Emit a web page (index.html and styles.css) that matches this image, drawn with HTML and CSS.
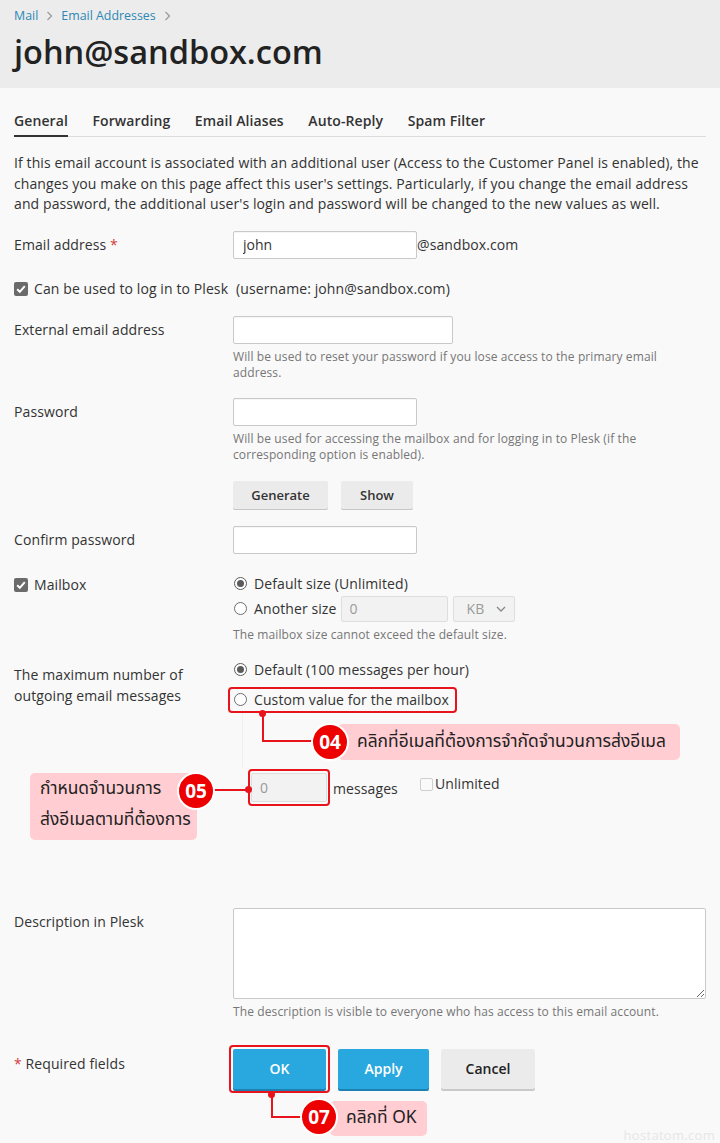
FILE: index.html
```html
<!DOCTYPE html>
<html lang="en">
<head>
<meta charset="utf-8">
<title>john@sandbox.com</title>
<link rel="stylesheet" href="styles.css">
</head>
<body>
<div class="page">
  <header class="page-header">
    <nav class="breadcrumb">
      <a class="crumb">Mail</a>
      <svg class="chev" width="7" height="10" viewBox="0 0 7 10"><polyline points="1.5,1 5.5,5 1.5,9" fill="none" stroke="#9a9a9a" stroke-width="1.2"/></svg>
      <a class="crumb">Email Addresses</a>
      <svg class="chev" width="7" height="10" viewBox="0 0 7 10"><polyline points="1.5,1 5.5,5 1.5,9" fill="none" stroke="#9a9a9a" stroke-width="1.2"/></svg>
    </nav>
    <h1 class="title">john@sandbox.com</h1>
  </header>

  <main class="content">
    <ul class="tabs">
      <li class="tab active">General</li>
      <li class="tab">Forwarding</li>
      <li class="tab">Email Aliases</li>
      <li class="tab">Auto-Reply</li>
      <li class="tab">Spam Filter</li>
    </ul>

    <p class="intro">If this email account is associated with an additional user (Access to the Customer Panel is enabled), the changes you make on this page affect this user's settings. Particularly, if you change the email address and password, the additional user's login and password will be changed to the new values as well.</p>

    <div class="row row-email">
      <div class="label">Email address <span class="req">*</span></div>
      <div class="control inline">
        <input class="input w183 pad9" type="text" value="john"><span class="domain">@sandbox.com</span>
      </div>
    </div>

    <div class="check-line row-login">
      <span class="cbox"><svg width="14" height="14" viewBox="0 0 14 14"><path d="M3.2 7.2 L5.8 9.8 L10.8 4.2" fill="none" stroke="#fff" stroke-width="2"/></svg></span>
      <span>Can be used to log in to Plesk</span>
      <span class="username">(username: john@sandbox.com)</span>
    </div>

    <div class="row row-ext">
      <div class="label">External email address</div>
      <div class="control">
        <input class="input w219" type="text">
        <div class="help">Will be used to reset your password if you lose access to the primary email address.</div>
      </div>
    </div>

    <div class="row row-pass">
      <div class="label">Password</div>
      <div class="control">
        <input class="input w183" type="password">
        <div class="help">Will be used for accessing the mailbox and for logging in to Plesk (if the corresponding option is enabled).</div>
        <div class="small-buttons">
          <button class="btn-small gen">Generate</button>
          <button class="btn-small show">Show</button>
        </div>
      </div>
    </div>

    <div class="row row-confirm">
      <div class="label">Confirm password</div>
      <div class="control">
        <input class="input w183" type="password">
      </div>
    </div>

    <div class="row row-mailbox">
      <div class="label check-label">
        <span class="cbox"><svg width="14" height="14" viewBox="0 0 14 14"><path d="M3.2 7.2 L5.8 9.8 L10.8 4.2" fill="none" stroke="#fff" stroke-width="2"/></svg></span>
        <span>Mailbox</span>
      </div>
      <div class="control">
        <div class="radio-line"><span class="radio checked"></span><span>Default size (Unlimited)</span></div>
        <div class="radio-line size-line">
          <span class="radio"></span><span>Another size</span>
          <input class="input disabled w107" type="text" value="0" disabled>
          <span class="select disabled">KB<svg width="10" height="6" viewBox="0 0 10 6"><polyline points="1,1 5,5 9,1" fill="none" stroke="#888" stroke-width="1.3"/></svg></span>
        </div>
        <div class="help help-size">The mailbox size cannot exceed the default size.</div>
      </div>
    </div>

    <div class="row row-max">
      <div class="label label-two">The maximum number of outgoing email messages</div>
      <div class="control">
        <div class="radio-line"><span class="radio checked"></span><span>Default (100 messages per hour)</span></div>
        <div class="radio-line hl hl-custom"><span class="radio"></span><span>Custom value for the mailbox</span></div>
        <div class="sub">
          <div class="sub-gap"></div>
          <div class="sub-line">
            <span class="hl hl-input"><input class="input disabled w76" type="text" value="0" disabled></span>
            <span class="msgs">messages</span>
            <span class="unl"><span class="cbox empty"></span><span>Unlimited</span></span>
          </div>
        </div>
      </div>
    </div>

    <div class="row row-desc">
      <div class="label">Description in Plesk</div>
      <div class="control">
        <textarea class="textarea"></textarea>
        <div class="help">The description is visible to everyone who has access to this email account.</div>
      </div>
    </div>

    <div class="row row-actions">
      <div class="label label-req"><span class="req">*</span> Required fields</div>
      <div class="control actions">
        <span class="hl hl-ok"><button class="btn primary ok">OK</button></span>
        <button class="btn primary apply">Apply</button>
        <button class="btn cancel">Cancel</button>
      </div>
    </div>
  </main>

  <!-- annotation callouts -->
  <div class="callout c04">
    <span class="dot"></span>
    <span class="wire-v"></span>
    <span class="wire-h"></span>
    <span class="badge">04</span>
    <span class="note">คลิกที่อีเมลที่ต้องการจำกัดจำนวนการส่งอีเมล</span>
  </div>

  <div class="callout c05">
    <span class="note note-two">กำหนดจำนวนการ<br>ส่งอีเมลตามที่ต้องการ</span>
    <span class="badge">05</span>
    <span class="wire-h"></span>
    <span class="dot"></span>
  </div>

  <div class="callout c07">
    <span class="dot"></span>
    <span class="wire-v"></span>
    <span class="wire-h"></span>
    <span class="note">คลิกที่ OK</span>
    <span class="badge">07</span>
  </div>

  <div class="watermark">hostatom.com</div>
</div>
</body>
</html>
```

FILE: styles.css
```css
* { box-sizing: border-box; }

html, body {
  margin: 0;
  padding: 0;
  background: #f9f9f9;
}

body {
  font-family: "Open Sans", "Noto Sans", sans-serif;
  font-size: 14px;
  color: #333;
  line-height: 20px;
  letter-spacing: 0.1px;
}

.page {
  position: relative;
  width: 720px;
  height: 1143px;
  overflow: hidden;
}

/* Header */
.page-header {
  background: #ececec;
  height: 88px;
  padding: 7px 14px 0;
}

.breadcrumb {
  display: flex;
  align-items: center;
  gap: 8px;
  font-size: 12.4px;
  line-height: 18px;
  letter-spacing: 0;
}

.crumb {
  color: #2c88b5;
  text-decoration: none;
}

.chev { display: block; }

.title {
  margin: 7px 0 0;
  font-size: 32.5px;
  line-height: 40px;
  font-weight: 600;
  color: #222;
  letter-spacing: 0;
}

/* Content */
.content {
  padding: 0 14px;
}

.tabs {
  list-style: none;
  margin: 23px 0 0;
  padding: 0;
  display: flex;
  gap: 24.5px;
  border-bottom: 1px solid #dcdcdc;
}

.tab {
  font-weight: 600;
  color: #333;
  padding-bottom: 4px;
  border-bottom: 2px solid transparent;
  margin-bottom: -1px;
}

.tab.active {
  border-bottom-color: #333;
}

.intro {
  margin: 16px 0 0;
  line-height: 20.5px;
  color: #333;
}

/* Rows */
.row {
  display: grid;
  grid-template-columns: 219px 473px;
  align-items: start;
}

.label {
  padding-top: 4px;
  line-height: 20px;
  color: #333;
}

.req { color: #d33c3c; }

.control { min-width: 0; }

.control.inline {
  display: flex;
  align-items: center;
}

.row-email { margin-top: 16px; }
.row-login { margin-top: 20px; }
.row-ext { margin-top: 17px; }
.row-pass { margin-top: 17px; }
.row-confirm { margin-top: 17px; }
.row-mailbox { margin-top: 20px; }
.row-max { margin-top: 17px; }
.row-desc { margin-top: 102px; }
.row-actions { margin-top: 29px; }

.input {
  display: block;
  height: 28px;
  border: 1px solid #c9c9c9;
  border-radius: 2px;
  background: #fff;
  font-family: inherit;
  font-size: 14px;
  color: #333;
  padding: 0 8px;
  box-shadow: inset 0 1px 1px rgba(0,0,0,0.04);
  outline: none;
}

.w183 { width: 184px; }
.w219 { width: 220px; }
.w107 { width: 107px; }
.w76 { width: 76px; }
.pad9 { padding-left: 9px; }

.input.disabled {
  background: #f2f2f2;
  border-color: #dedede;
  color: #9a9a9a;
  box-shadow: none;
}

.domain { margin-left: 0; }

.username { margin-left: 2px; }

.help {
  font-size: 12px;
  line-height: 16px;
  letter-spacing: 0.11px;
  color: #767676;
  margin-top: 5px;
}

.small-buttons {
  display: flex;
  gap: 13px;
  margin-top: 18px;
}

.btn-small {
  height: 28px;
  border: none;
  border-radius: 2px;
  background: #ebebeb;
  box-shadow: 0 1px 0 #c6c6c6;
  font-family: inherit;
  font-size: 13px;
  font-weight: 600;
  color: #333;
  padding: 0;
}

.btn-small.gen { width: 95px; }
.btn-small.show { width: 72px; }

/* checkboxes and radios */
.check-line {
  display: flex;
  align-items: center;
  gap: 6px;
  height: 20px;
}

.check-label {
  display: flex;
  align-items: center;
  gap: 6px;
  padding-top: 1px;
}

.cbox {
  width: 14px;
  height: 14px;
  border-radius: 2px;
  background: #6b6b6b;
  display: inline-flex;
  flex: none;
}

.cbox.empty {
  background: #fafafa;
  border: 1px solid #cfcfcf;
  width: 13px;
  height: 13px;
}

.radio-line {
  display: flex;
  align-items: center;
  gap: 7px;
  height: 20px;
  margin-left: 1px;
}

.radio {
  width: 13px;
  height: 13px;
  border-radius: 50%;
  border: 1px solid #6e6e6e;
  background: #fff;
  flex: none;
  position: relative;
}

.radio.checked {
  border-color: #5a5a5a;
}

.radio.checked::after {
  content: "";
  position: absolute;
  left: 2px;
  top: 2px;
  width: 7px;
  height: 7px;
  border-radius: 50%;
  background: #5a5a5a;
}

.size-line {
  height: 26px;
  margin-top: 2px;
}

.size-line .input {
  height: 26px;
  margin-left: -3px;
}

.select {
  width: 62px;
  height: 26px;
  border: 1px solid #dedede;
  border-radius: 2px;
  background: #f2f2f2;
  color: #9a9a9a;
  display: flex;
  align-items: center;
  justify-content: space-between;
  padding: 0 8px 0 13px;
  margin-left: -2px;
}

.help-size { margin-top: 5px; }

.label-two {
  line-height: 21px;
  padding-top: 4px;
}

/* highlight boxes */
.hl {
  border: 2px solid #e8141c;
  border-radius: 4px;
}

.hl-custom {
  height: 26px;
  margin-top: 7px;
  margin-left: -5px;
  padding-left: 4px;
  width: 229px;
}

.sub {
  margin-left: 9px;
}

.sub-gap {
  height: 56px;
  border-left: 1px solid #f0f0f0;
}

.sub-line {
  display: flex;
  align-items: center;
}

.hl-input {
  display: inline-block;
  padding: 2px 1px;
  margin-left: 6px;
}

.hl-input .input {
  height: 29px;
}

.msgs {
  margin-left: 3px;
  margin-top: 3px;
}

.unl {
  display: inline-flex;
  align-items: center;
  gap: 2px;
  margin-left: 22px;
  margin-top: -6px;
}

.textarea {
  display: block;
  width: 473px;
  height: 91px;
  border: 1px solid #c9c9c9;
  border-radius: 2px;
  background: #fff;
  resize: vertical;
  font-family: inherit;
  outline: none;
}

/* actions */
.label-req { padding-top: 5px; }

.actions {
  display: flex;
  align-items: center;
}

.hl-ok {
  display: inline-block;
  padding: 2px;
  margin: -4px 0 0 -4px;
}

.btn {
  height: 40px;
  border: none;
  border-radius: 2px;
  font-family: inherit;
  font-size: 14px;
  font-weight: 600;
  padding: 0;
  display: block;
}

.btn.primary {
  background: #28a8de;
  color: #fff;
  box-shadow: 0 2px 0 #1d80b3;
}

.btn.ok { width: 93px; }
.btn.apply { width: 91px; margin-left: 8px; margin-top: -4px; }

.btn.cancel {
  width: 94px;
  margin-left: 12px;
  margin-top: -4px;
  background: #ebebeb;
  color: #222;
  box-shadow: 0 2px 0 #c9c9c9;
}

/* callouts */
.callout {
  position: absolute;
  left: 0;
  top: 0;
  font-family: "Noto Sans Thai", "Tahoma", "Noto Sans", sans-serif;
  letter-spacing: 0;
}

.callout > span { position: absolute; }

.dot {
  width: 7px;
  height: 7px;
  border-radius: 50%;
  background: #e8141c;
}

.wire-v {
  width: 2px;
  background: #e8141c;
}

.wire-h {
  height: 2px;
  background: #e8141c;
}

.badge {
  width: 38px;
  height: 38px;
  border-radius: 50%;
  background: #ec0000;
  border: 2px solid #fff;
  color: #fff;
  font-family: "Open Sans", sans-serif;
  font-weight: 700;
  font-size: 19px;
  display: flex;
  align-items: center;
  justify-content: center;
  z-index: 2;
}

.note {
  background: #ffcdd2;
  border-radius: 5px;
  color: #222;
  font-size: 17.4px;
  line-height: 36px;
  white-space: nowrap;
}

.c04 .dot { left: 259px; top: 710px; }
.c04 .wire-v { left: 262px; top: 713px; height: 29px; }
.c04 .wire-h { left: 262px; top: 740px; width: 52px; }
.c04 .badge { left: 311px; top: 723px; }
.c04 .note { left: 338px; top: 724px; height: 36px; width: 342px; padding-left: 19px; }

.c05 .note-two { left: 30px; top: 773px; width: 167px; height: 67px; padding: 1px 0 0 10px; line-height: 31px; }
.c05 .badge { left: 177px; top: 772px; }
.c05 .wire-h { left: 214px; top: 789px; width: 34px; }
.c05 .dot { left: 245px; top: 786px; }

.c07 .dot { left: 268px; top: 1091px; }
.c07 .wire-v { left: 271px; top: 1094px; height: 24px; }
.c07 .wire-h { left: 271px; top: 1116px; width: 32px; }
.c07 .badge { left: 300px; top: 1098px; }
.c07 .note { left: 330px; top: 1101px; width: 97px; height: 35px; padding-left: 16px; line-height: 35px; }

.watermark {
  position: absolute;
  right: 5px;
  bottom: 0;
  font-size: 13px;
  line-height: 16px;
  color: #e6e6e6;
  letter-spacing: 0.3px;
}
```
